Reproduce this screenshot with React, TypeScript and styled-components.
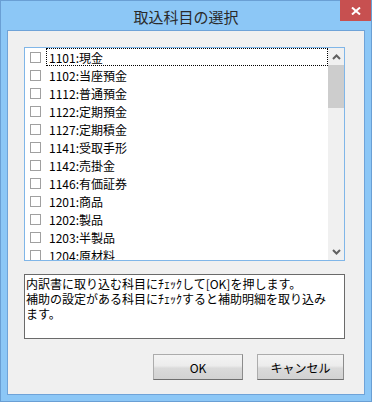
import { createGlobalStyle, styled } from 'styled-components';

const GlobalStyle = createGlobalStyle`
  body {
    margin: 0;
    background: #ffffff;
    font-family: 'Noto Sans CJK JP', 'Liberation Sans', sans-serif;
    font-size: 12px;
    color: #000000;
  }
`;

const Window = styled.div`
  box-sizing: border-box;
  width: 372px;
  height: 402px;
  border: 1px solid #6a9fd4;
  background: #8cc7f6;
  padding: 0 6px 6px 6px;
  display: flex;
  flex-direction: column;
`;

const TitleBar = styled.div`
  position: relative;
  height: 29px;
  display: flex;
  align-items: center;
  justify-content: center;
  flex-shrink: 0;
`;

const Title = styled.div`
  font-size: 15px;
  color: #2a2a2a;
  line-height: 1;
  padding-top: 1px;
`;

const CloseButton = styled.div`
  position: absolute;
  top: -1px;
  right: -6px;
  width: 31px;
  height: 21px;
  background: #c75050;
  display: flex;
  align-items: center;
  justify-content: center;
`;

const Client = styled.div`
  flex: 1;
  border: 1px solid #6fa3d8;
  background: #f0f0f0;
  padding: 16px 19px 14px 16px;
  display: flex;
  flex-direction: column;
`;

const ListBox = styled.div`
  box-sizing: border-box;
  height: 214px;
  border: 1px solid #80b6e8;
  background: #ffffff;
  display: flex;
  overflow: hidden;
`;

const Items = styled.div`
  flex: 1;
  display: flex;
  flex-direction: column;
  overflow: hidden;
`;

const Row = styled.div`
  flex-shrink: 0;
  height: 18px;
  display: flex;
  align-items: center;
  padding-left: 5px;
`;

const Check = styled.span`
  box-sizing: border-box;
  width: 11px;
  height: 11px;
  border: 1px solid #a0a0a0;
  background: #ffffff;
  flex-shrink: 0;
`;

const Label = styled.span<{ $focused: boolean }>`
  box-sizing: border-box;
  flex: 1;
  height: 18px;
  margin-left: 5px;
  padding-left: 2px;
  line-height: 17px;
  white-space: nowrap;
  border: 1px dotted ${({ $focused }) => ($focused ? '#000000' : 'transparent')};
  border-left-width: 1px;
`;

const ScrollBar = styled.div`
  width: 16px;
  background: #f0f0f0;
  display: flex;
  flex-direction: column;
  flex-shrink: 0;
`;

const ArrowButton = styled.div`
  height: 17px;
  display: flex;
  align-items: center;
  justify-content: center;
  flex-shrink: 0;
`;

const Track = styled.div`
  flex: 1;
`;

const Thumb = styled.div`
  height: 43px;
  background: #cdcdcd;
`;

const Note = styled.div`
  box-sizing: border-box;
  height: 65px;
  margin-top: 13px;
  border: 1px solid #6a6a6a;
  background: #ffffff;
  padding: 1px 1px;
  line-height: 15px;
`;

const NoteLine = styled.div`
  white-space: nowrap;
`;

const ButtonRow = styled.div`
  margin-top: 15px;
  display: flex;
  justify-content: flex-end;
  gap: 14px;
  padding-right: 1px;
`;

const Button = styled.div<{ $w: number }>`
  box-sizing: border-box;
  width: ${({ $w }) => $w}px;
  height: 26px;
  border: 1px solid #acacac;
  border-right-color: #8c8c8c;
  border-bottom-color: #6e6e6e;
  background: linear-gradient(#f4f4f4 0%, #ececec 45%, #dadada 55%, #d2d2d2 100%);
  display: flex;
  align-items: center;
  justify-content: center;
  font-size: 12px;
  color: #000000;
`;

const accounts = [
  '1101:現金',
  '1102:当座預金',
  '1112:普通預金',
  '1122:定期預金',
  '1127:定期積金',
  '1141:受取手形',
  '1142:売掛金',
  '1146:有価証券',
  '1201:商品',
  '1202:製品',
  '1203:半製品',
  '1204:原材料',
];

const Chevron = ({ up }: { up: boolean }) => (
  <svg width="9" height="6" viewBox="0 0 9 6">
    <path
      d={up ? 'M1 5 L4.5 1.5 L8 5' : 'M1 1 L4.5 4.5 L8 1'}
      fill="none"
      stroke="#606060"
      strokeWidth="2"
    />
  </svg>
);

export default function App() {
  return (
    <>
      <GlobalStyle />
      <Window>
        <TitleBar>
          <Title>取込科目の選択</Title>
          <CloseButton>
            <svg width="10" height="8" viewBox="0 0 10 8">
              <path d="M1 0.5 L9 7.5 M9 0.5 L1 7.5" stroke="#ffffff" strokeWidth="2" />
            </svg>
          </CloseButton>
        </TitleBar>
        <Client>
          <ListBox>
            <Items>
              {accounts.map((a, i) => (
                <Row key={a}>
                  <Check />
                  <Label $focused={i === 0}>{a}</Label>
                </Row>
              ))}
            </Items>
            <ScrollBar>
              <ArrowButton>
                <Chevron up />
              </ArrowButton>
              <Thumb />
              <Track />
              <ArrowButton>
                <Chevron up={false} />
              </ArrowButton>
            </ScrollBar>
          </ListBox>
          <Note>
            <NoteLine>内訳書に取り込む科目にﾁｪｯｸして[OK]を押します。</NoteLine>
            <NoteLine>補助の設定がある科目にﾁｪｯｸすると補助明細を取り込み</NoteLine>
            <NoteLine>ます。</NoteLine>
          </Note>
          <ButtonRow>
            <Button $w={90}>OK</Button>
            <Button $w={87}>キャンセル</Button>
          </ButtonRow>
        </Client>
      </Window>
    </>
  );
}
